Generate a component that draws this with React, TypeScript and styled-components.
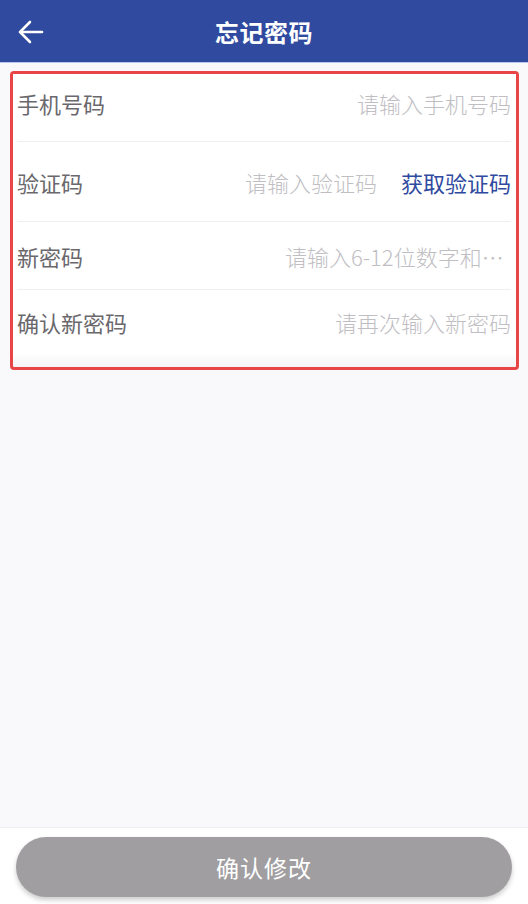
import React from 'react';
import styled, { createGlobalStyle } from 'styled-components';

const GlobalStyle = createGlobalStyle`
    html, body {
        margin: 0;
        padding: 0;
        background: #f9f8fb;
        font-family: "Noto Sans CJK SC", "Noto Sans", sans-serif;
    }
    * { box-sizing: border-box; }
`

const rows = [
    { label: '手机号码', placeholder: '请输入手机号码', height: 68, shift: 10 },
    { label: '验证码', placeholder: '请输入验证码', height: 80, shift: 0, code: true },
    { label: '新密码', placeholder: '请输入6-12位数字和字母组合', height: 68, shift: 0 },
    { label: '确认新密码', placeholder: '请再次输入新密码', height: 64, shift: 0 },
];

const App = () => (
    <Page>
        <GlobalStyle />
        <Header>
            <BackButton aria-label="返回">
                <svg width="26" height="24" viewBox="0 0 26 24" fill="none" stroke="#fff" strokeWidth="2.6" strokeLinecap="round" strokeLinejoin="round">
                    <path d="M24 12H3" />
                    <path d="M12 2L2 12l10 10" />
                </svg>
            </BackButton>
            <Title>忘记密码</Title>
        </Header>
        <Content>
            <Highlight>
                <List>
                    {rows.map((r, i) => (
                        <Row key={r.label} $height={r.height} $shift={r.shift} $last={i === rows.length - 1}>
                            <Label>{r.label}</Label>
                            <Input placeholder={r.placeholder} />
                            {r.code && <CodeButton>获取验证码</CodeButton>}
                        </Row>
                    ))}
                </List>
            </Highlight>
        </Content>
        <Footer>
            <SubmitButton>确认修改</SubmitButton>
        </Footer>
    </Page>
);

export default App;

const Page = styled.div`
    display: flex;
    flex-direction: column;
    height: 904px;
    background: #f9f8fb;
`

const Header = styled.header`
    position: relative;
    height: 63px;
    flex-shrink: 0;
    display: flex;
    align-items: center;
    justify-content: center;
    background: #2f4a9f;
    border-bottom: 1px solid #b9c7ea;
`

const BackButton = styled.button`
    position: absolute;
    left: 18px;
    top: 20px;
    padding: 0;
    border: none;
    background: none;
    display: flex;
`

const Title = styled.h1`
    margin: 0;
    color: #fff;
    font-size: 24px;
    font-weight: 700;
    letter-spacing: 0.5px;
`

const Content = styled.main`
    flex: 1;
    padding: 8px 9px 0 10px;
`

const Highlight = styled.div`
    border: 3px solid #e84646;
    border-radius: 4px;
    padding-bottom: 13px;
    background: linear-gradient(#fff, #fff calc(100% - 14px), #f4f3f6);
`

const List = styled.div`
    background: #fff;
    padding: 0 5px 0 4px;
`

const Row = styled.div<{ $height: number; $shift: number; $last: boolean }>`
    height: ${p => p.$height}px;
    padding-bottom: ${p => p.$shift}px;
    display: flex;
    align-items: center;
    gap: 24px;
    border-bottom: ${p => (p.$last ? 'none' : '1px solid #efeef2')};
`

const Label = styled.span`
    flex-shrink: 0;
    font-size: 22px;
    color: #6a686c;
`

const Input = styled.input`
    width: 226px;
    margin-left: auto;
    min-width: 0;
    border: none;
    outline: none;
    background: transparent;
    text-align: right;
    font-family: inherit;
    font-size: 22px;
    font-weight: 300;
    color: #333;
    text-overflow: ellipsis;
    padding: 0;

    &::placeholder {
        color: #c0bec3;
    }
`

const CodeButton = styled.button`
    flex-shrink: 0;
    border: none;
    background: none;
    padding: 0;
    font-family: inherit;
    font-size: 22px;
    color: #2f4a9f;
`

const Footer = styled.footer`
    flex-shrink: 0;
    background: #fff;
    border-top: 1px solid #efeef2;
    padding: 9px 16px 7px;
`

const SubmitButton = styled.button`
    width: 100%;
    height: 60px;
    border: none;
    border-radius: 30px;
    background: #a09ea1;
    color: #fff;
    font-family: inherit;
    font-size: 23px;
    letter-spacing: 1px;
    box-shadow: 0 3px 5px rgba(0, 0, 0, 0.2);
`
